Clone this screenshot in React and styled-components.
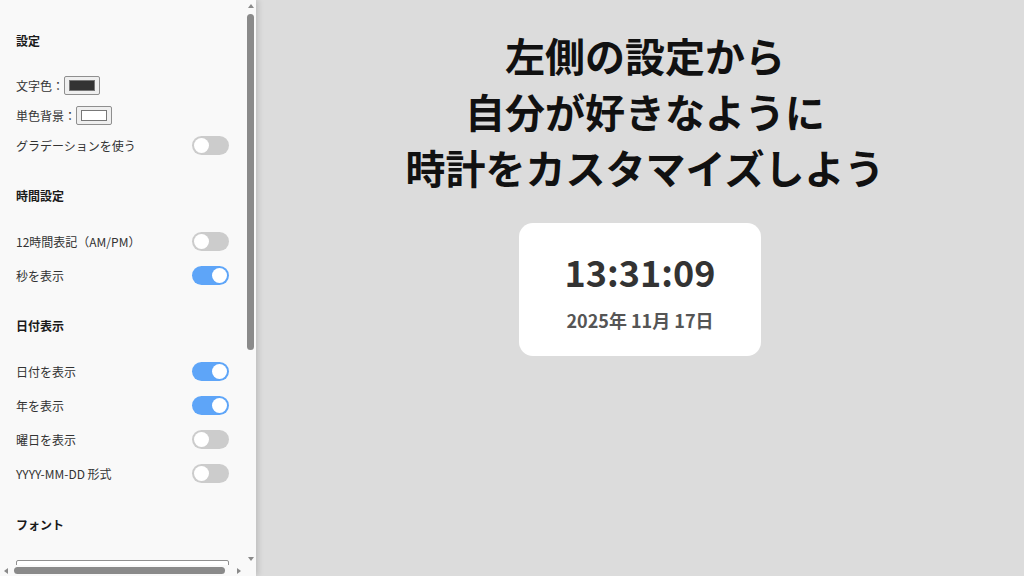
import React, { useState } from "react";
import styled, { createGlobalStyle } from "styled-components";

const FONT = `"Noto Sans CJK JP", "Noto Sans", sans-serif`;

const GlobalStyle = createGlobalStyle`
  html, body { margin: 0; padding: 0; height: 100%; }
  body { font-family: ${FONT}; color: #333; }
  #root { height: 100%; }
`;

const Layout = styled.div`
  display: flex;
  height: 100vh;
  overflow: hidden;
`;

/* sidebar = scroll area + drawn scrollbars (headless hides native ones) */
const Sidebar = styled.aside`
  width: 256px;
  flex-shrink: 0;
  height: 100vh;
  display: grid;
  grid-template-columns: 1fr 11px;
  grid-template-rows: 1fr 11px;
  background: #f9f9f9;
  box-shadow: 2px 0 6px rgba(0, 0, 0, 0.15);
  position: relative;
  z-index: 1;
`;

const ScrollArea = styled.div`
  overflow: auto;
  scrollbar-width: none;
  padding: 16px;
  min-height: 0;

  &::-webkit-scrollbar {
    display: none;
  }
`;

const VBar = styled.div`
  display: flex;
  flex-direction: column;
  align-items: center;
`;

const HBar = styled.div`
  display: flex;
  align-items: center;
`;

const Arrow = styled.span`
  flex-shrink: 0;
  width: ${(p) => (p.$dir === "up" || p.$dir === "down" ? "11px" : "12px")};
  height: ${(p) => (p.$dir === "up" || p.$dir === "down" ? "12px" : "11px")};
  display: flex;
  align-items: center;
  justify-content: center;

  &::before {
    content: "";
    width: 0;
    height: 0;
    border: 3.5px solid transparent;
    ${(p) =>
      ({
        up: "border-bottom: 4px solid #8a8a8a; border-top-width: 0;",
        down: "border-top: 4px solid #8a8a8a; border-bottom-width: 0;",
        left: "border-right: 4px solid #8a8a8a; border-left-width: 0;",
        right: "border-left: 4px solid #8a8a8a; border-right-width: 0;",
      })[p.$dir]}
  }
`;

const VTrack = styled.div`
  flex: 1;
  padding: 2px 0;
`;

const HTrack = styled.div`
  flex: 1;
  padding: 0 2px;
  display: flex;
  align-items: center;
`;

const Thumb = styled.div`
  background: #8a8a8a;
  border-radius: 4px;
  width: ${(p) => (p.$vertical ? "7px" : `${p.$size}px`)};
  height: ${(p) => (p.$vertical ? `${p.$size}px` : "7px")};
`;

const Section = styled.section`
  padding-bottom: 16px;
`;

const SectionTitle = styled.h3`
  margin: 15px 0 25px;
  font-size: 12px;
  line-height: 20px;
  font-weight: 700;
  color: #1a1a1a;
`;

const RowList = styled.div`
  display: flex;
  flex-direction: column;
  gap: ${(p) => p.$gap}px;
`;

const Row = styled.label`
  display: flex;
  align-items: center;
  justify-content: ${(p) => (p.$spread ? "space-between" : "flex-start")};
  height: ${(p) => p.$h || 20}px;
  font-size: 12px;
  color: #333;
  white-space: nowrap;
`;

const ColorInput = styled.input.attrs({ type: "color" })`
  width: 36px;
  height: 19px;
  padding: 1px 2px;
  margin: 0;
  border: 1px solid #8f8f8f;
  border-radius: 2px;
  background: #efefef;
  box-sizing: border-box;
  cursor: pointer;

  &::-webkit-color-swatch-wrapper {
    padding: 2px;
  }
  &::-webkit-color-swatch {
    border: 1px solid #777;
    border-radius: 0;
  }
`;

const Track = styled.button`
  position: relative;
  width: 37px;
  height: 19px;
  border: none;
  padding: 0;
  border-radius: 10px;
  background: ${(p) => (p.$on ? "#5ea5f8" : "#cccccc")};
  cursor: pointer;
  flex-shrink: 0;

  &::after {
    content: "";
    position: absolute;
    top: 2px;
    left: ${(p) => (p.$on ? "20px" : "2px")};
    width: 15px;
    height: 15px;
    border-radius: 50%;
    background: #fff;
    transition: left 0.2s;
  }
`;

const Select = styled.select`
  display: block;
  width: 100%;
  height: 30px;
  box-sizing: border-box;
  border: 1px solid #8f8f8f;
  border-radius: 2px;
  background: #fff;
  font-family: ${FONT};
  font-size: 12px;
  padding: 0 6px;
  color: #333;
`;

const Range = styled.input.attrs({ type: "range" })`
  width: 110px;
  margin: 0;
  accent-color: #5ea5f8;
`;

const Swatches = styled.div`
  display: grid;
  grid-template-columns: repeat(8, 1fr);
  gap: 4px;
  width: 224px;
`;

const Swatch = styled.span`
  height: 20px;
  border-radius: 3px;
  border: 1px solid #bbb;
  background: ${(p) => p.$c};
`;

const Main = styled.main`
  flex: 1;
  background: #dcdcdc;
  display: flex;
  flex-direction: column;
  align-items: center;
  padding-top: 27px;
`;

const Heading = styled.h1`
  margin: 0;
  padding-left: 10px;
  font-size: 40px;
  line-height: 56px;
  font-weight: 700;
  color: #111;
  text-align: center;
`;

const ClockCard = styled.div`
  margin-top: 28px;
  background: #fff;
  border-radius: 14px;
  padding: 24px 46px 22px;
  display: flex;
  flex-direction: column;
  align-items: center;
`;

const Time = styled.div`
  font-size: 36px;
  line-height: 48px;
  font-weight: 700;
  color: #333;
  margin-bottom: 12px;
`;

const DateText = styled.div`
  font-size: 18px;
  line-height: 27px;
  font-weight: 700;
  color: #555;
`;

const Toggle = ({ on, onClick }) => (
  <Track type="button" $on={on} onClick={onClick} aria-pressed={on} />
);

export default function App() {
  const [flags, setFlags] = useState({
    gradient: false,
    h12: false,
    seconds: true,
    date: true,
    year: true,
    weekday: false,
    iso: false,
    shadow: false,
    round: true,
  });
  const flip = (k) => () => setFlags((f) => ({ ...f, [k]: !f[k] }));

  const toggleRow = (label, k) => (
    <Row $spread key={k}>
      {label}
      <Toggle on={flags[k]} onClick={flip(k)} />
    </Row>
  );

  return (
    <>
      <GlobalStyle />
      <Layout>
        <Sidebar>
          <ScrollArea>
            <Section>
              <SectionTitle>設定</SectionTitle>
              <RowList $gap={10.5}>
                <Row $h={19}>
                  文字色：
                  <ColorInput defaultValue="#333333" />
                </Row>
                <Row $h={19}>
                  単色背景：
                  <ColorInput defaultValue="#ffffff" />
                </Row>
                {toggleRow("グラデーションを使う", "gradient")}
              </RowList>
            </Section>

            <Section>
              <SectionTitle>時間設定</SectionTitle>
              <RowList $gap={14}>
                {toggleRow("12時間表記（AM/PM）", "h12")}
                {toggleRow("秒を表示", "seconds")}
              </RowList>
            </Section>

            <Section>
              <SectionTitle>日付表示</SectionTitle>
              <RowList $gap={14.3}>
                {toggleRow("日付を表示", "date")}
                {toggleRow("年を表示", "year")}
                {toggleRow("曜日を表示", "weekday")}
                {toggleRow("YYYY-MM-DD 形式", "iso")}
              </RowList>
            </Section>

            <Section>
              <SectionTitle>フォント</SectionTitle>
              <Select defaultValue="noto">
                <option value="noto">Noto Sans JP</option>
                <option value="serif">明朝体</option>
                <option value="mono">等幅</option>
              </Select>
            </Section>

            <Section>
              <SectionTitle>文字サイズ</SectionTitle>
              <RowList $gap={14}>
                <Row $spread>
                  時刻
                  <Range min="20" max="80" defaultValue="40" />
                </Row>
                <Row $spread>
                  日付
                  <Range min="10" max="40" defaultValue="18" />
                </Row>
                <Swatches>
                  {["#333333", "#ffffff", "#5ea5f8", "#f87171", "#34d399", "#fbbf24", "#a78bfa", "#f472b6"].map((c) => (
                    <Swatch key={c} $c={c} />
                  ))}
                </Swatches>
              </RowList>
            </Section>

            <Section>
              <SectionTitle>その他</SectionTitle>
              <RowList $gap={14}>
                {toggleRow("影をつける", "shadow")}
                {toggleRow("角を丸くする", "round")}
              </RowList>
            </Section>
          </ScrollArea>

          <VBar>
            <Arrow $dir="up" />
            <VTrack>
              <Thumb $vertical $size={336} />
            </VTrack>
            <Arrow $dir="down" />
          </VBar>

          <HBar>
            <Arrow $dir="left" />
            <HTrack>
              <Thumb $size={211} />
            </HTrack>
            <Arrow $dir="right" />
          </HBar>
        </Sidebar>

        <Main>
          <Heading>
            左側の設定から
            <br />
            自分が好きなように
            <br />
            時計をカスタマイズしよう
          </Heading>
          <ClockCard>
            <Time>13:31:09</Time>
            <DateText>2025年 11月 17日</DateText>
          </ClockCard>
        </Main>
      </Layout>
    </>
  );
}
